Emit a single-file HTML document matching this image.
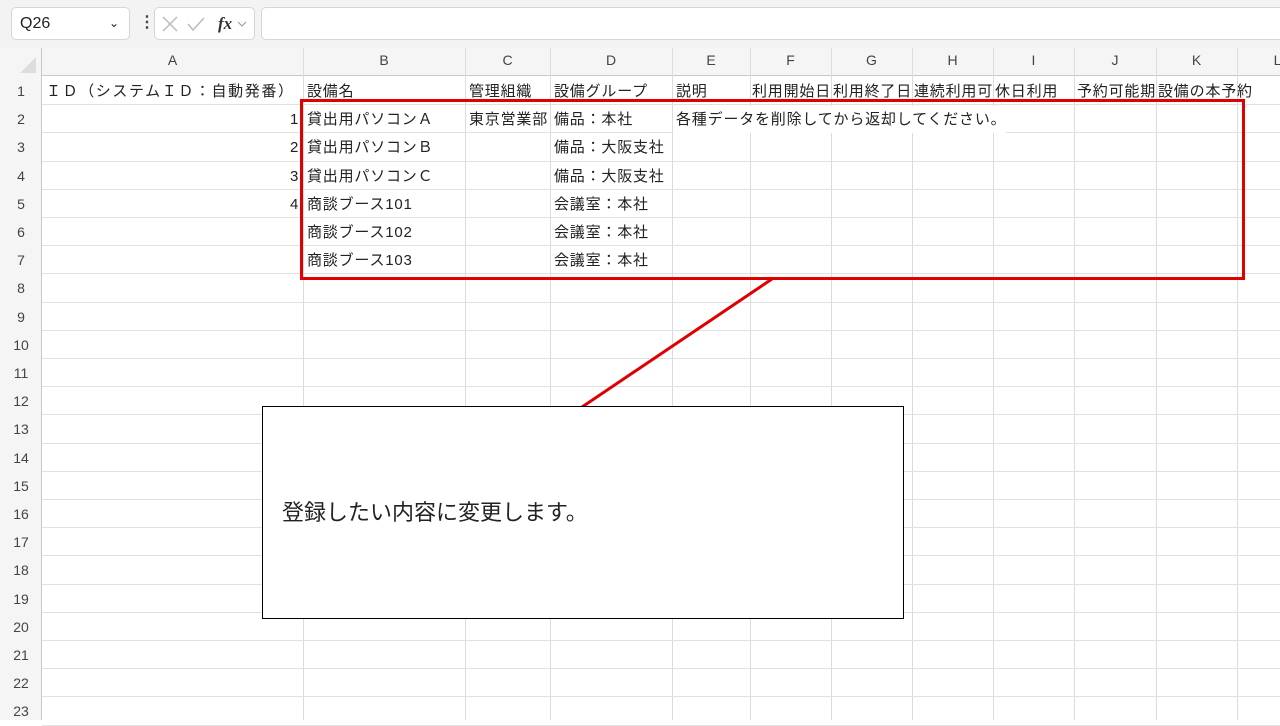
<!DOCTYPE html>
<html><head><meta charset="utf-8"><style>
*{margin:0;padding:0;box-sizing:border-box}
body{width:1280px;height:720px;overflow:hidden;background:#fff;position:relative;font-family:"Liberation Sans","Noto Sans CJK JP",sans-serif;color:#222}
.a{position:absolute;white-space:nowrap}
.v{position:absolute;top:48px;height:672px;width:1px;background:#dcdcdc}
.h{position:absolute;left:0;width:1280px;height:1px;background:#e1e1e1}
.c{position:absolute;font-size:15px;line-height:28px;margin-top:2px;white-space:nowrap;color:#222;letter-spacing:0.8px}
.rh{position:absolute;left:0;width:42px;text-align:center;font-size:14px;line-height:28px;margin-top:1px;color:#444}
.ch{position:absolute;top:48px;height:28px;line-height:24px;text-align:center;font-size:14px;color:#444}
</style></head><body>
<div class="a" style="left:0;top:0;width:1280px;height:48px;background:#f3f3f3"></div>
<div class="a" style="left:11px;top:7px;width:119px;height:33px;background:#fff;border:1px solid #d6d6d6;border-radius:5px;font-size:16px;line-height:31px;padding-left:8px">Q26<span style="position:absolute;right:10px;font-size:12px">&#8964;</span></div>
<div class="a" style="left:139px;top:12px;font-size:16px;font-weight:bold;color:#444">&#8942;</div>
<div class="a" style="left:154px;top:7px;width:101px;height:33px;background:#fff;border:1px solid #d6d6d6;border-radius:5px"></div>
<svg class="a" style="left:160px;top:14px" width="90" height="20"><path d="M3 3 L17 17 M17 3 L3 17" stroke="#bbb" stroke-width="1.5"/><path d="M28 10 L33 16 L44 4" stroke="#bbb" stroke-width="1.5" fill="none"/><text x="58" y="15" font-family="Liberation Serif" font-style="italic" font-weight="bold" font-size="17" fill="#333">fx</text><path d="M78 8 L82 12 L86 8" stroke="#999" fill="none"/></svg>
<div class="a" style="left:261px;top:7px;width:1030px;height:33px;background:#fff;border:1px solid #d6d6d6;border-radius:5px"></div>
<div class="a" style="left:0;top:48px;width:1280px;height:28px;background:#f5f5f5;border-bottom:1px solid #c8c8c8"></div>
<div class="a" style="left:0;top:48px;width:42px;height:672px;background:#f5f5f5;border-right:1px solid #c8c8c8"></div>
<svg class="a" style="left:18px;top:55px" width="20" height="20"><path d="M18 2 L18 18 L2 18 Z" fill="#ddd"/></svg>
<div id="g"></div>
<div class="ch" style="left:42px;width:261px">A</div><div class="ch" style="left:303px;width:162px">B</div><div class="ch" style="left:465px;width:85px">C</div><div class="ch" style="left:550px;width:122px">D</div><div class="ch" style="left:672px;width:78px">E</div><div class="ch" style="left:750px;width:81px">F</div><div class="ch" style="left:831px;width:81px">G</div><div class="ch" style="left:912px;width:81px">H</div><div class="ch" style="left:993px;width:81px">I</div><div class="ch" style="left:1074px;width:82px">J</div><div class="ch" style="left:1156px;width:81px">K</div><div class="ch" style="left:1237px;width:81px">L</div>
<script>
var g=document.getElementById('g'),s='';
[303,465,550,672,750,831,912,993,1074,1156,1237].forEach(function(x){s+='<div class="v" style="left:'+x+'px"></div>'});
for(var i=1;i<=23;i++){var t=76+(i-1)*28.2;s+='<div class="h" style="top:'+(t+28.2).toFixed(1)+'px;left:42px"></div><div class="rh" style="top:'+t.toFixed(1)+'px">'+i+'</div>';}
g.innerHTML=s;
</script>
<div class="c" style="left:46px;top:76px;letter-spacing:1.6px">ＩＤ（システムＩＤ：自動発番）</div>
<div class="c" style="left:307px;top:76px">設備名</div><div class="c" style="left:469px;top:76px">管理組織</div><div class="c" style="left:554px;top:76px">設備グループ</div><div class="c" style="left:676px;top:76px">説明</div>
<div class="c" style="left:752px;top:76px;width:79px;overflow:hidden">利用開始日時</div><div class="c" style="left:833px;top:76px;width:79px;overflow:hidden">利用終了日時</div><div class="c" style="left:914px;top:76px;width:79px;overflow:hidden">連続利用可能</div><div class="c" style="left:995px;top:76px">休日利用</div><div class="c" style="left:1077px;top:76px;width:79px;overflow:hidden">予約可能期間</div><div class="c" style="left:1158px;top:76px">設備の本予約</div>
<div class="c" style="left:290px;top:104px">1</div><div class="c" style="left:307px;top:104px">貸出用パソコンＡ</div><div class="c" style="left:469px;top:104px;width:81px;overflow:hidden">東京営業部</div><div class="c" style="left:554px;top:104px">備品：本社</div><div class="c" style="left:673px;top:104px;padding-left:3px;height:27px;background:#fff">各種データを削除してから返却してください。</div>
<div class="c" style="left:290px;top:132px">2</div><div class="c" style="left:307px;top:132px">貸出用パソコンＢ</div><div class="c" style="left:554px;top:132px">備品：大阪支社</div>
<div class="c" style="left:290px;top:161px">3</div><div class="c" style="left:307px;top:161px">貸出用パソコンＣ</div><div class="c" style="left:554px;top:161px">備品：大阪支社</div>
<div class="c" style="left:290px;top:189px">4</div><div class="c" style="left:307px;top:189px">商談ブース101</div><div class="c" style="left:554px;top:189px">会議室：本社</div>
<div class="c" style="left:307px;top:217px">商談ブース102</div><div class="c" style="left:554px;top:217px">会議室：本社</div>
<div class="c" style="left:307px;top:245px">商談ブース103</div><div class="c" style="left:554px;top:245px">会議室：本社</div>
<div class="a" style="left:300px;top:99px;width:945px;height:181px;border:3px solid #e00000"></div>
<svg class="a" style="left:0;top:0" width="1280" height="720"><line x1="772" y1="279" x2="582" y2="407" stroke="#e00000" stroke-width="3"/></svg>
<div class="a" style="left:262px;top:406px;width:642px;height:213px;background:#fff;border:1.5px solid #000"><div style="position:absolute;left:19px;top:88px;font-size:22px">登録したい内容に変更します。</div></div>
</body></html>
